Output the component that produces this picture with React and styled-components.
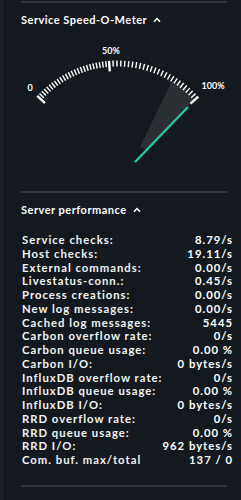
import styled, { createGlobalStyle } from "styled-components";

const GlobalStyle = createGlobalStyle`
  html, body {
    margin: 0;
    padding: 0;
    background: #13191e;
  }
  body {
    font-family: Lato, "Noto Sans", sans-serif;
    color: #fff;
  }
`;

const Sidebar = styled.div`
  width: 241px;
  height: 500px;
  background: #13191e;
  border-left: 4px solid #181e23;
  box-sizing: border-box;
  overflow: hidden;
  position: relative;
  &::before {
    content: "";
    position: absolute;
    left: 0;
    top: 0;
    bottom: 0;
    width: 1px;
    background: #0f1317;
  }
`;

const Separator = styled.div`
  height: 2px;
  margin: ${(p) => p.$top || 0}px 14px 0 17px;
  background: #31373c;
`;

const Title = styled.div`
  display: flex;
  align-items: center;
  gap: 6px;
  margin: 10px 0 0 17px;
  font-size: 11px;
  font-weight: 700;
  line-height: 14px;
  letter-spacing: 0.5px;
  color: #fff;
`;

const Chevron = () => (
  <svg width="8" height="6" viewBox="0 0 8 6">
    <path d="M1 4.8 L4 1.6 L7 4.8" fill="none" stroke="#fff" strokeWidth="1.5" />
  </svg>
);

const GaugeSvg = styled.svg`
  display: block;
  margin-left: -4px;
`;

const Label = styled.text`
  font-family: Lato, sans-serif;
  font-size: 9px;
  font-weight: 700;
  fill: #fff;
`;

const CX = 117.5;
const CY = 170;
const R = 108.5;
const A0 = -47.7;
const A50 = -4.5;
const A100 = 48.1;

const tickAngle = (pct) =>
  pct <= 50 ? A0 + ((A50 - A0) * pct) / 50 : A50 + ((A100 - A50) * (pct - 50)) / 50;

const Gauge = () => {
  const ticks = [];
  for (let i = 0; i <= 50; i++) {
    const pct = i * 2;
    const major = pct === 0 || pct === 50 || pct === 100;
    const a = (tickAngle(pct) * Math.PI) / 180;
    const len = major ? 10.5 : 6;
    const sx = Math.sin(a);
    const cy = Math.cos(a);
    ticks.push(
      <line
        key={i}
        x1={CX + sx * R}
        y1={CY - cy * R}
        x2={CX + sx * (R - len)}
        y2={CY - cy * (R - len)}
        stroke="#fff"
        strokeWidth={major ? 2.4 : 1.4}
      />
    );
  }
  return (
    <GaugeSvg width="241" height="164" viewBox="0 28 241 164">
      <polygon
        points="140,148 172,82 178,85 184,89 189,94 194,101 148,151"
        fill="#2a2f33"
      />
      {ticks}
      <line x1="135" y1="163" x2="188" y2="108" stroke="#17d49e" strokeWidth="2.2" />
      <Label x="30" y="92" textAnchor="middle">0</Label>
      <Label x="111" y="55" textAnchor="middle">50%</Label>
      <Label x="213" y="90" textAnchor="middle">100%</Label>
    </GaugeSvg>
  );
};

const StatsTable = styled.div`
  display: grid;
  grid-template-columns: 1fr auto;
  grid-auto-rows: 13.75px;
  margin: 16px 13px 0 18px;
  font-size: 11.3px;
  font-weight: 700;
  line-height: 13.75px;
  letter-spacing: 1px;
`;

const StatLabel = styled.div`
  color: #f2f4f5;
  white-space: nowrap;
`;

const StatValue = styled.div`
  color: #fff;
  text-align: right;
  white-space: nowrap;
  margin-right: -1px;
`;

const stats = [
  ["Service checks:", "8.79/s"],
  ["Host checks:", "19.11/s"],
  ["External commands:", "0.00/s"],
  ["Livestatus-conn.:", "0.45/s"],
  ["Process creations:", "0.00/s"],
  ["New log messages:", "0.00/s"],
  ["Cached log messages:", "5445"],
  ["Carbon overflow rate:", "0/s"],
  ["Carbon queue usage:", "0.00 %"],
  ["Carbon I/O:", "0 bytes/s"],
  ["InfluxDB overflow rate:", "0/s"],
  ["InfluxDB queue usage:", "0.00 %"],
  ["InfluxDB I/O:", "0 bytes/s"],
  ["RRD overflow rate:", "0/s"],
  ["RRD queue usage:", "0.00 %"],
  ["RRD I/O:", "962 bytes/s"],
  ["Com. buf. max/total", "137 / 0"],
];

export default function App() {
  return (
    <>
      <GlobalStyle />
      <Sidebar>
        <Separator $top={1} />
        <Title>
          Service Speed-O-Meter <Chevron />
        </Title>
        <Gauge />
        <Separator />
        <Title>
          Server performance <Chevron />
        </Title>
        <StatsTable>
          {stats.map(([k, v]) => (
            <>
              <StatLabel key={k}>{k}</StatLabel>
              <StatValue key={k + "v"}>{v}</StatValue>
            </>
          ))}
        </StatsTable>
        <Separator $top={18} />
      </Sidebar>
    </>
  );
}
